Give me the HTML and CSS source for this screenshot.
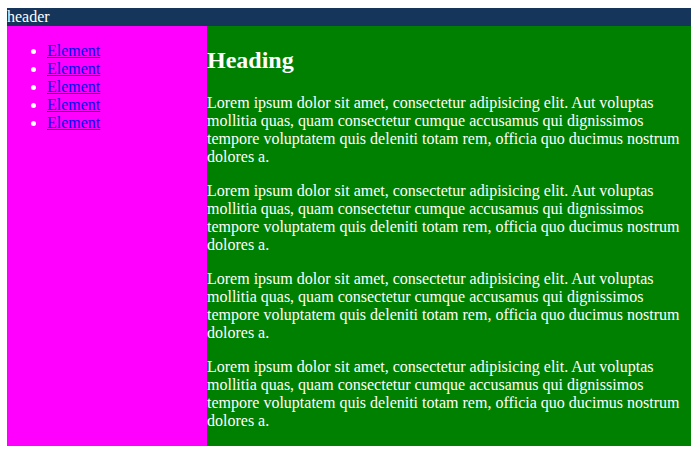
FILE: index.html
```html
<!DOCTYPE html>
<html>
<head>
<meta charset="utf-8">
<link rel="stylesheet" href="styles.css">
</head>
<body>
<div class="page">
  <header class="header">header</header>
  <div class="layout">
    <nav class="sidebar">
      <ul class="menu">
        <li><a href="#">Element</a></li>
        <li><a href="#">Element</a></li>
        <li><a href="#">Element</a></li>
        <li><a href="#">Element</a></li>
        <li><a href="#">Element</a></li>
      </ul>
    </nav>
    <main class="main">
      <h2 class="title">Heading</h2>
      <p class="text">Lorem ipsum dolor sit amet, consectetur adipisicing elit. Aut voluptas mollitia quas, quam consectetur cumque accusamus qui dignissimos tempore voluptatem quis deleniti totam rem, officia quo ducimus nostrum dolores a.</p>
      <p class="text">Lorem ipsum dolor sit amet, consectetur adipisicing elit. Aut voluptas mollitia quas, quam consectetur cumque accusamus qui dignissimos tempore voluptatem quis deleniti totam rem, officia quo ducimus nostrum dolores a.</p>
      <p class="text">Lorem ipsum dolor sit amet, consectetur adipisicing elit. Aut voluptas mollitia quas, quam consectetur cumque accusamus qui dignissimos tempore voluptatem quis deleniti totam rem, officia quo ducimus nostrum dolores a.</p>
      <p class="text">Lorem ipsum dolor sit amet, consectetur adipisicing elit. Aut voluptas mollitia quas, quam consectetur cumque accusamus qui dignissimos tempore voluptatem quis deleniti totam rem, officia quo ducimus nostrum dolores a.</p>
    </main>
  </div>
</div>
</body>
</html>
```
FILE: styles.css
```css
html, body {
  margin: 0;
  padding: 0;
  background: #fff;
}
body {
  font-family: "Liberation Serif", "Times New Roman", serif;
  font-size: 16px;
  line-height: 18px;
  padding: 8px 8px 8px 7px;
}
.page {
  width: 684px;
}
.header {
  background: #15365a;
  color: #fff;
  height: 18px;
}
.layout {
  display: flex;
  align-items: stretch;
}
.sidebar {
  width: 200px;
  flex: 0 0 200px;
  background: #ff00ff;
}
.menu {
  margin: 16px 0;
  padding-left: 40px;
  color: #fff;
}
.menu a {
  color: #0000ee;
}
.main {
  flex: 1;
  background: #008000;
  color: #fff;
  display: flow-root;
}
.title {
  font-size: 24px;
  line-height: 28px;
  margin: 20px 0;
  font-weight: bold;
}
.text {
  margin: 16px 0;
}
```
